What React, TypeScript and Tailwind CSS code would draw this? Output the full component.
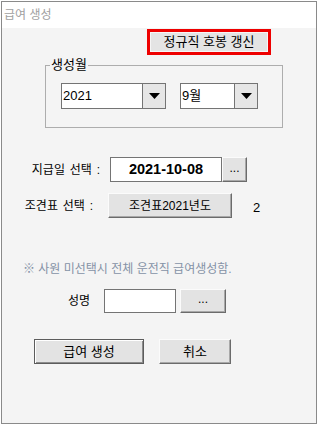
import { ReactNode } from 'react';

const font = 'font-["Liberation_Sans","Noto_Sans_CJK_KR",sans-serif]';

function WinButton({
  children,
  className = '',
  isDefault = false,
}: {
  children: ReactNode;
  className?: string;
  isDefault?: boolean;
}) {
  const edge = isDefault
    ? 'border border-[#5c5c5c] shadow-[inset_1px_1px_0_#ffffff,inset_-1px_-1px_0_#8c8c8c]'
    : 'border border-t-[#fbfbfb] border-l-[#fbfbfb] border-r-[#6b6b6b] border-b-[#6b6b6b] shadow-[inset_-1px_-1px_0_#a8a8a8]';
  return (
    <button
      type="button"
      className={`flex items-center justify-center bg-[#e3e3e3] text-[12px] leading-none text-black ${edge} ${className}`}
    >
      {children}
    </button>
  );
}

function Combo({ value, width }: { value: string; width: string }) {
  return (
    <div className={`flex h-[26px] border border-[#747474] bg-white ${width}`}>
      <span className="flex flex-1 items-center pl-[1px] text-[13px] text-black">{value}</span>
      <span className="flex w-[23px] items-center justify-center border-l border-[#747474] bg-[#e6e6e6]">
        <svg width="11" height="6" viewBox="0 0 11 6">
          <polygon points="0,0 11,0 5.5,6" fill="#000" />
        </svg>
      </span>
    </div>
  );
}

export default function App() {
  return (
    <div className={`h-[425px] w-[320px] bg-white pl-[1px] pt-[1px] ${font}`}>
      <div className="flex h-[423px] w-[316px] flex-col border border-[#8a8a8a]">
        <div className="flex h-[26px] items-center bg-white px-[2px] text-[12px] text-[#a0a0a0]">
          급여 생성
        </div>

        <div className="flex flex-1 flex-col bg-[#f4f4f4]">
          <div className="ml-[145px] mt-[1px] h-[26px] w-[124px] border-[3px] border-[#ee0000]">
            <div className="flex h-full items-center justify-center border border-[#f6f6f6] bg-[#e4e4e4] text-[13px] text-black">
              정규직 호봉 갱신
            </div>
          </div>

          <div className="relative ml-[43px] mt-[10px] h-[63px] w-[238px] border border-[#adadad]">
            <span className="absolute -top-[10px] left-[4px] bg-[#f4f4f4] px-[1px] text-[13px] leading-[18px] text-black">
              생성월
            </span>
            <div className="flex pl-[15px] pt-[17px]">
              <Combo value="2021" width="w-[105px]" />
              <div className="ml-[14px]">
                <Combo value="9월" width="w-[78px]" />
              </div>
            </div>
          </div>

          <div className="mt-[29px] flex items-center">
            <span className="w-[108px] pr-[10px] text-right text-[12px] text-black [word-spacing:1.5px]">지급일 선택 :</span>
            <div className="flex h-[25px] w-[112px] items-center justify-center border border-[#747474] bg-white text-[14.5px] font-bold text-black">
              2021-10-08
            </div>
            <WinButton className="h-[25px] w-[25px] pb-[4px]">...</WinButton>
          </div>

          <div className="mt-[11px] flex items-center">
            <span className="w-[106px] pr-[15px] text-right text-[12px] text-black [word-spacing:1.5px]">조견표 선택 :</span>
            <WinButton className="h-[25px] w-[124px]">조견표2021년도</WinButton>
            <span className="ml-[21px] mt-[5px] text-[13px] text-black">2</span>
          </div>

          <p className="ml-[21px] mt-[43px] text-[12px] leading-[16px] text-[#8592a6]">
            ※ 사원 미선택시 전체 운전직 급여생성함.
          </p>

          <div className="ml-[66px] mt-[12px] flex items-center">
            <span className="w-[36px] text-[12px] text-black">성명</span>
            <div className="h-[24px] w-[72px] border border-[#747474] bg-white" />
            <WinButton className="ml-[4px] h-[24px] w-[46px] pb-[4px]">...</WinButton>
          </div>

          <div className="ml-[32px] mt-[26px] flex">
            <WinButton isDefault className="h-[25px] w-[110px] text-[13px]">
              급여 생성
            </WinButton>
            <WinButton className="ml-[15px] h-[25px] w-[72px] text-[13px]">취소</WinButton>
          </div>
        </div>
      </div>
    </div>
  );
}
